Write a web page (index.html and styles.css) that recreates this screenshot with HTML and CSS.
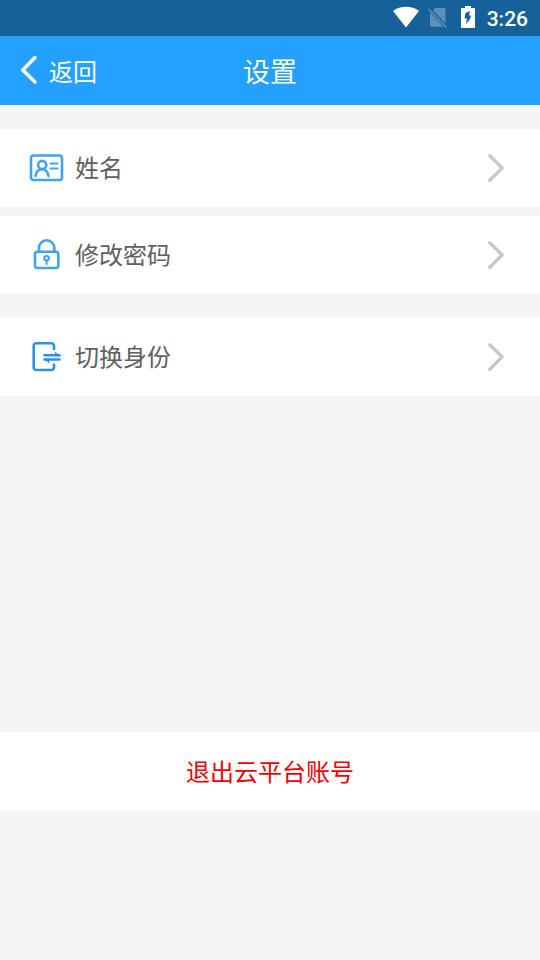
FILE: index.html
```html
<!DOCTYPE html>
<html lang="zh-CN">
<head>
<meta charset="utf-8">
<meta name="viewport" content="width=device-width, initial-scale=1">
<title>设置</title>
<link rel="stylesheet" href="styles.css">
</head>
<body>
<div class="status-bar">
  <svg class="status-icon" width="26" height="22" viewBox="0 0 26 22" aria-hidden="true"><path d="M0 5C7.500-.6 18.500-.6 26 5L13 21.500Z" fill="#fff"/></svg>
  <svg class="status-icon sim" width="21" height="22" viewBox="0 0 21 22" aria-hidden="true"><path d="M8 2H17a1.500 1.500 0 0 1 1.500 1.500V17.500L5.800 4.200ZM3 6.500L16.500 20.700H4.500A1.500 1.500 0 0 1 3 19.200Z" fill="#5c90b8"/><path d="M1.500 3L19.500 21.500" stroke="#5c90b8" stroke-width="1.600"/></svg>
  <svg class="status-icon battery" width="14" height="22" viewBox="0 0 14 22" aria-hidden="true"><path fill="#fff" fill-rule="evenodd" d="M4 0h6v2H13q1 0 1 1v18q0 1-1 1H1q-1 0-1-1V3q0-1 1-1h3ZM9 5L4.500 7 3.500 12.500H6L5 18.500 9 13l1.200-3.500H8Z"/></svg>
  <time class="clock">3:26</time>
</div>
<header class="nav-bar">
  <button class="back" type="button">
    <svg class="back-arrow" viewBox="0 0 18 30" fill="none" stroke="currentColor" stroke-width="3.500" stroke-linecap="round" stroke-linejoin="round" aria-hidden="true"><path d="M15 2.500L2.800 15 15 27"/></svg>
    <span>返回</span>
  </button>
  <h1 class="title">设置</h1>
</header>
<main class="content">
  <nav class="menu">
    <a class="row" href="#name">
      <svg class="row-icon" viewBox="0 0 36 36" aria-hidden="true"><rect x="3" y="5.500" width="31" height="24.500" rx="2.500"/><circle cx="14.200" cy="15" r="4.100"/><path d="M7.500 26c.6-4 2.700-6.700 6.700-6.700s5.500 2.700 6.300 6.700"/><path class="thin" d="M22.500 13.500H29.500M22.500 18.500H29.500"/></svg>
      <span class="label">姓名</span>
      <svg class="chevron" viewBox="0 0 18 30" aria-hidden="true"><path d="M2.800 2.800L15.200 15 2.800 27.200"/></svg>
    </a>
    <a class="row" href="#password">
      <svg class="row-icon" viewBox="0 0 36 36" aria-hidden="true"><rect x="7" y="14.800" width="23.300" height="16.200" rx="2.500"/><path d="M11 14.500V11a7.700 7.700 0 0 1 15.400 0v3.500"/><circle class="thin" cx="18.600" cy="21.300" r="2.300"/><path class="thin" d="M18.600 23.500v3.500"/></svg>
      <span class="label">修改密码</span>
      <svg class="chevron" viewBox="0 0 18 30" aria-hidden="true"><path d="M2.800 2.800L15.200 15 2.800 27.200"/></svg>
    </a>
    <a class="row separate" href="#identity">
      <svg class="row-icon switch" viewBox="0 0 36 36" aria-hidden="true"><path d="M26 10V6.800a2.500 2.500 0 0 0-2.500-2.500H8.200a2.500 2.500 0 0 0-2.500 2.500V28.500a2.500 2.500 0 0 0 2.500 2.500H23.500a2.500 2.500 0 0 0 2.500-2.500v-3"/><path d="M16.500 16.300H31.500M16.500 20.500H31.500"/><path class="solid" d="M27 12.800L33 17.200H27ZM21.500 24.500L15.300 19.700h6.200Z"/></svg>
      <span class="label">切换身份</span>
      <svg class="chevron" viewBox="0 0 18 30" aria-hidden="true"><path d="M2.800 2.800L15.200 15 2.800 27.200"/></svg>
    </a>
  </nav>
  <button class="logout" type="button">退出云平台账号</button>
</main>
</body>
</html>
```
FILE: styles.css
```css
* {
  box-sizing: border-box;
}

body {
  display: flex;
  flex-direction: column;
  min-height: 100vh;
  margin: 0;
  background: #f4f5f7;
  color: #606060;
  font-family: "Noto Sans CJK SC", sans-serif;
  font-size: 24px;
  line-height: 36px;
}

button {
  border: 0;
  font: inherit;
  cursor: pointer;
}

.status-bar {
  display: flex;
  align-items: center;
  justify-content: flex-end;
  height: 36px;
  padding-right: 12px;
  background: #166199;
  color: #fff;
}

.status-icon {
  margin-bottom: 2px;
}

.sim {
  margin-left: 8px;
}

.battery {
  margin-right: 12px;
  margin-left: 13px;
}

.clock {
  padding-top: 2px;
  font-family: Roboto, sans-serif;
  font-size: 21px;
  font-weight: 500;
}

.nav-bar {
  display: grid;
  grid-template-columns: 1fr auto 1fr;
  align-items: center;
  height: 69px;
  padding: 0 20px;
  background: #24a0ff;
  color: #fff;
}

.back {
  display: flex;
  align-items: center;
  justify-self: start;
  gap: 11px;
  padding: 0;
  background: none;
  color: inherit;
}

.back-arrow {
  width: 18px;
  height: 30px;
  margin-bottom: 2px;
}

.title {
  margin: 0;
  font-size: 27px;
  font-weight: 400;
}

.content {
  display: flex;
  flex: 1;
  flex-direction: column;
  padding: 24px 0 150px;
}

.menu {
  display: flex;
  flex-direction: column;
  gap: 9px;
}

.row {
  display: flex;
  align-items: center;
  min-height: 78px;
  padding: 0 35px 0 28px;
  background: #fff;
  color: inherit;
  text-decoration: none;
}

.separate {
  margin-top: 15px;
}

.row-icon {
  width: 36px;
  height: 36px;
  margin-right: 11px;
  fill: none;
  stroke: #40a2f0;
  stroke-width: 2.600;
  stroke-linecap: round;
}

.row-icon .thin {
  stroke-width: 2;
}

.switch {
  stroke: #2f92e0;
}

.switch .solid {
  fill: #2f92e0;
  stroke: none;
}

.label {
  flex: 1;
  padding-bottom: 2px;
}

.chevron {
  width: 18px;
  height: 30px;
  fill: none;
  stroke: #c8c8c8;
  stroke-width: 3.400;
  stroke-linecap: round;
  stroke-linejoin: round;
}

.logout {
  min-height: 78px;
  margin-top: auto;
  padding-bottom: 2px;
  background: #fff;
  color: #f00000;
}
```
